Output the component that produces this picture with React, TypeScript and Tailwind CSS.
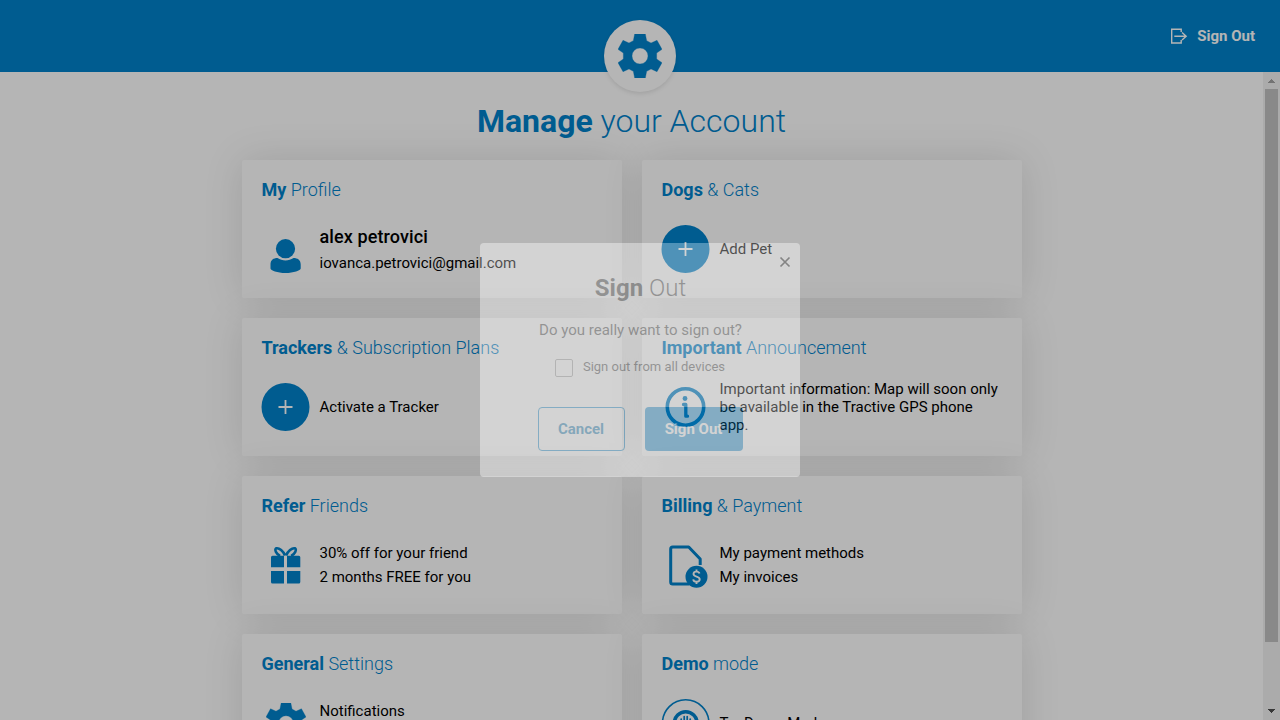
import type { ReactNode } from "react";

const GEAR =
  "M-16-66H16L20-46L33-39L51-47L66-20L50-9V9L66 20L51 47L33 39L20 46L16 66H-16L-20 46L-33 39L-51 47L-66 20L-50 9V-9L-66-20L-51-47L-33-39L-20-46ZM0-24A24 24 0 1 0 0 24A24 24 0 1 0 0-24Z";

function Gear({ className }: { className: string }) {
  return (
    <svg viewBox="-66 -66 132 132" className={className}>
      <path d={GEAR} fill="currentColor" fillRule="evenodd" stroke="currentColor" strokeWidth="1" strokeLinejoin="round" />
    </svg>
  );
}

function SignOutIcon() {
  return (
    <svg viewBox="0 0 18 18" className="h-[18px] w-[18px]" fill="none" stroke="currentColor" strokeWidth="1.4">
      <path d="M11.2 5V2.300H1.7V16H11.2V13M4.3 9.300H16.4M12 5.500L16.2 9.300L12 13.100" />
    </svg>
  );
}

function UserIcon() {
  return (
    <svg viewBox="0.500 0 48 48" className="size-12 overflow-visible" fill="currentColor">
      <circle cx="24" cy="16.7" r="9.6" />
      <path d="M9 32.5C9 28 12 26 16 26C18.5 27.6 21 28.4 24 28.4S29.500 27.600 32 26C36 26 39.200 28 39.200 32.500V36.500C39.200 38.200 32 41 24 41S9 38.200 9 36.500Z" />
    </svg>
  );
}

function PlusIcon() {
  return (
    <svg viewBox="0.500 0 48 48" className="size-12 overflow-visible">
      <circle cx="24" cy="24" r="24" fill="currentColor" />
      <path d="M17 24H31M24 17V31" stroke="#fff" strokeWidth="1.8" />
    </svg>
  );
}

function InfoIcon() {
  return (
    <svg viewBox="0.500 0 48 48" className="size-12 overflow-visible">
      <circle cx="24" cy="24" r="18.2" fill="none" stroke="currentColor" strokeWidth="3.600" />
      <circle cx="23.500" cy="15.500" r="2.400" fill="currentColor" />
      <path d="M22 21.500H24.300V33.200H26" fill="none" stroke="currentColor" strokeWidth="3.300" strokeLinejoin="round" strokeLinecap="round" />
    </svg>
  );
}

function GiftIcon() {
  return (
    <svg viewBox="0.500 0 48 48" className="size-12 overflow-visible" fill="currentColor">
      <path d="M9.500 16.300a1.500 1.500 0 0 1 1.500-1.500h11.500v11.500h-13zM25.500 14.800h11.800a1.500 1.500 0 0 1 1.500 1.500v10h-13.300zM9.500 30h13v12.600h-11.500a1.500 1.500 0 0 1-1.500-1.500zM25.500 30h13.300v11.100a1.500 1.500 0 0 1-1.500 1.500h-11.800z" />
      <path d="M23.500 14.500C22 10.500 17.500 6.500 14.800 7.300C12.500 8.300 14.800 13.300 18.600 15M24.600 14.500C26.200 10.500 30.600 6.500 33.400 7.300C35.700 8.300 33.400 13.300 29.600 15" fill="none" stroke="currentColor" strokeWidth="2.600" />
    </svg>
  );
}

function InvoiceIcon() {
  return (
    <svg viewBox="0.500 0 48 48" className="size-12 overflow-visible">
      <path d="M38.700 24V18L27.200 6H11.200Q9.200 6 9.200 8V41Q9.200 43 11.200 43H28" fill="none" stroke="currentColor" strokeWidth="3" strokeLinejoin="round" />
      <circle cx="35" cy="35.700" r="11" fill="currentColor" />
      <path d="M38 32.600C37.600 31.100 36.500 30.600 35 30.600C33.200 30.600 32 31.500 32 33C32 36.400 38.200 34.800 38.200 38.300C38.200 40 36.900 40.800 35 40.800C33.200 40.800 32 40 31.700 38.400M35 28.500V30.700M35 40.700V42.900" fill="none" stroke="#fff" strokeWidth="1.900" />
    </svg>
  );
}

function DemoIcon() {
  return (
    <svg viewBox="0.300 0 48 48" className="size-12 overflow-visible" fill="none" stroke="currentColor">
      <circle cx="24" cy="24" r="23.200" strokeWidth="1.600" />
      <circle cx="24" cy="24" r="11.300" strokeWidth="3.600" />
      <path d="M19.500 20V27M22.500 17.500V30M25.500 17.500V30M28.500 20V27" strokeWidth="1.700" strokeLinecap="round" />
    </svg>
  );
}

type CardProps = { strong: string; rest: string; icon: ReactNode; children: ReactNode };

function Card({ strong, rest, icon, children }: CardProps) {
  return (
    <section className="h-[138px] rounded-[2px] bg-white px-5 pt-5 shadow-[0_0_40px_rgba(0,0,0,0.12)]">
      <h2 className="text-[18px] leading-5 font-light text-[#0082cb]">
        <b className="font-bold">{strong}</b> {rest}
      </h2>
      <div className="mt-[21px] flex h-[56px] items-center">
        <div className="flex h-12 w-12 shrink-0 items-center justify-center text-[#0082cb]">{icon}</div>
        <div className="ml-[10px] text-[15px] leading-6 text-black">{children}</div>
      </div>
    </section>
  );
}

function Scrollbar() {
  return (
    <div className="flex w-[17px] shrink-0 flex-col items-center bg-[#f1f1f1]">
      <svg viewBox="0 0 17 17" className="size-[17px] shrink-0" shapeRendering="crispEdges">
        <path d="M5 11H12L8.500 7Z" fill="#a3a3a3" />
      </svg>
      <div className="h-[553px] w-[13px] bg-[#c1c1c1]" />
      <div className="grow" />
      <svg viewBox="0 0 17 17" className="size-[17px] shrink-0" shapeRendering="crispEdges">
        <path d="M5 6H12L8.500 10Z" fill="#505050" />
      </svg>
    </div>
  );
}

function SignOutDialog() {
  return (
    <div className="relative flex h-[234px] w-80 flex-col items-center rounded-[4px] bg-white text-[#333] opacity-[0.31]">
      <svg viewBox="0 0 12 12" className="absolute top-[13px] right-[9px] size-3" fill="none" stroke="#000" strokeWidth="1.7">
        <path d="M1.500 1.500L10.500 10.500M10.500 1.500L1.500 10.500" />
      </svg>
      <h2 className="mt-[31px] pl-px text-[24px] leading-7 font-light">
        <b className="font-bold">Sign</b> Out
      </h2>
      <p className="mt-[18px] pl-px text-[15px] leading-5">Do you really want to sign out?</p>
      <label className="mt-[15px] flex h-[24px] items-center">
        <span className="mt-[2px] size-[18px] rounded-[2px] border border-[#999]" />
        <span className="ml-[10px] text-[13px] leading-5">Sign out from all devices</span>
      </label>
      <div className="mt-[28px] flex gap-5 text-[15px] font-bold">
        <button className="h-11 w-[87px] rounded-[4px] border border-[#0082cb] text-[#0070ad]">Cancel</button>
        <button className="h-11 w-[98px] rounded-[4px] bg-[#0082cb] text-white">Sign Out</button>
      </div>
    </div>
  );
}

export default function App() {
  return (
    <div className="relative flex h-[720px] w-[1280px] flex-col overflow-hidden bg-white font-[Roboto,sans-serif]">
      <header className="relative z-10 flex h-[72px] shrink-0 items-center justify-end bg-[#0082cb] pr-[25px] text-white">
        <div className="absolute top-5 left-[604px] flex size-[72px] items-center justify-center rounded-full bg-white text-[#0082cb] shadow-[0_2px_4px_rgba(0,0,0,0.1)]">
          <Gear className="size-11" />
        </div>
        <button className="flex items-center gap-[9px] text-[15px] font-bold">
          <SignOutIcon />
          Sign Out
        </button>
      </header>
      <div className="flex min-h-0 grow">
        <main className="flex w-[1263px] shrink-0 flex-col items-center overflow-hidden pt-[30px]">
          <h1 className="text-[32px] leading-[38px] font-light text-[#0082cb]">
            <b className="font-bold">Manage</b> your Account
          </h1>
          <div className="mt-5 grid w-[780px] grid-cols-2 gap-5">
            <Card strong="My" rest="Profile" icon={<div className="mt-[13px]"><UserIcon /></div>}>
              <p className="mt-[2px] text-[18px] leading-[26px] font-medium tracking-[0.1px]">alex petrovici</p>
              <p className="leading-[26px]">iovanca.petrovici@gmail.com</p>
            </Card>
            <Card strong="Dogs" rest="& Cats" icon={<PlusIcon />}>Add Pet</Card>
            <Card strong="Trackers" rest="& Subscription Plans" icon={<PlusIcon />}>Activate a Tracker</Card>
            <Card strong="Important" rest="Announcement" icon={<InfoIcon />}>
              <p className="w-[285px] leading-[18px]">
                Important information: Map will soon only be available in the Tractive GPS phone app.
              </p>
            </Card>
            <Card strong="Refer" rest="Friends" icon={<GiftIcon />}>
              <p>30% off for your friend</p>
              <p>2 months FREE for you</p>
            </Card>
            <Card strong="Billing" rest="& Payment" icon={<InvoiceIcon />}>
              <p>My payment methods</p>
              <p>My invoices</p>
            </Card>
            <Card strong="General" rest="Settings" icon={<Gear className="size-[40px]" />}>
              <p className="pb-6">Notifications</p>
            </Card>
            <Card strong="Demo" rest="mode" icon={<DemoIcon />}>Try Demo Mode</Card>
          </div>
        </main>
        <Scrollbar />
      </div>
      <div className="absolute inset-0 z-20 bg-black/29" />
      <div className="absolute inset-0 z-30 flex items-center justify-center">
        <div className="rounded-[4px] backdrop-brightness-[1.06]">
          <SignOutDialog />
        </div>
      </div>
    </div>
  );
}
